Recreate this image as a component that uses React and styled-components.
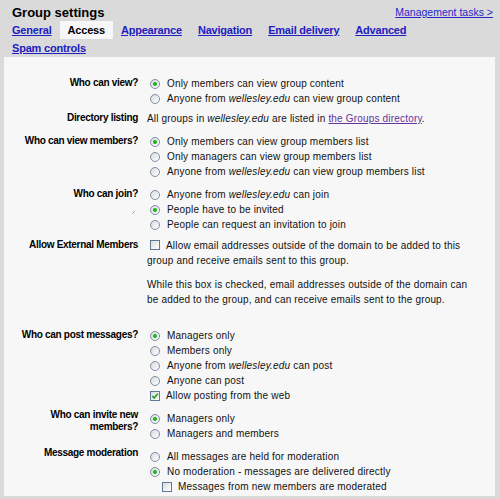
import React from 'react';
import styled, { createGlobalStyle } from 'styled-components';

const Global = createGlobalStyle`
  html, body { margin: 0; padding: 0; background: #dadada; }
  body { font-family: "Liberation Sans", Arial, sans-serif; color: #111; }
`;

const Page = styled.div`
  width: 500px;
  height: 499px;
  box-sizing: border-box;
  padding: 0 5px 3px 4px;
  display: flex;
  flex-direction: column;
  overflow: hidden;
`;

const Header = styled.div`
  display: flex;
  justify-content: space-between;
  align-items: center;
  height: 21px;
  box-sizing: border-box;
  padding: 3px 2px 0 8px;
`;

const Title = styled.h1`
  margin: 0;
  font-size: 13px;
  font-weight: bold;
  color: #000;
`;

const TopLink = styled.a`
  font-size: 10.5px;
  color: #2626c8;
  text-decoration: underline;
`;

const Tabs = styled.nav`
  display: flex;
  flex-wrap: wrap;
  max-width: 440px;
`;

const Tab = styled.a`
  height: 18px;
  line-height: 18px;
  padding: 0 8px;
  font-size: 11px;
  font-weight: bold;
  letter-spacing: -0.2px;
  white-space: nowrap;
  color: ${p => (p.$active ? '#000' : '#2020c0')};
  text-decoration: ${p => (p.$active ? 'none' : 'underline')};
  background: ${p => (p.$active ? '#f7f7f7' : 'transparent')};
`;

const Panel = styled.div`
  flex: 1;
  background: #f7f7f7;
  padding: 19px 0 2px 0;
  display: flex;
  flex-direction: column;
`;

const Row = styled.div`
  display: grid;
  grid-template-columns: 134px 325px;
  column-gap: 9px;
  margin-top: ${p => p.$gap || 0}px;
`;

const Label = styled.div`
  text-align: right;
  font-weight: bold;
  font-size: 10px;
  letter-spacing: -0.3px;
  line-height: 12px;
  padding-top: 1px;
  color: #000;
`;

const Values = styled.div`
  padding-top: ${p => p.$pad || 0}px;
  font-size: 10px;
  letter-spacing: 0.18px;
  line-height: 15px;
  color: #111;
`;

const Option = styled.div`
  display: flex;
  align-items: center;
  height: 15px;
  white-space: nowrap;
  padding-left: ${p => p.$indent || 0}px;
`;

const Radio = styled.span`
  flex: none;
  width: 10px;
  height: 10px;
  box-sizing: border-box;
  border-radius: 50%;
  border: 1px solid #7b8ea8;
  margin: 0 7px 0 3px;
  background: ${p =>
    p.$on
      ? 'radial-gradient(circle at center, #2cb52c 0 1.7px, transparent 2.3px), linear-gradient(135deg, #d8d8d8, #ffffff)'
      : 'linear-gradient(135deg, #d8d8d8, #ffffff)'};
`;

const Box = styled.span`
  flex: none;
  display: inline-flex;
  align-items: center;
  justify-content: center;
  width: 10px;
  height: 10px;
  box-sizing: border-box;
  border: 1px solid #5f7896;
  background: linear-gradient(135deg, #dcdcdc, #ffffff);
  margin: ${p => (p.$inline ? '0 6px 0 3px' : '0 6px 0 3px')};
  vertical-align: ${p => (p.$inline ? '-1px' : 'baseline')};
`;

const Para = styled.p`
  margin: ${p => p.$top || 0}px 0 0 0;
  line-height: 15px;
`;

const Dir = styled.a`
  color: #663399;
  text-decoration: underline;
`;

const Mark = styled.span`
  display: block;
  width: 3px;
  height: 3px;
  margin: 5px 3px 0 auto;
`;

const Check = ({ on, inline }) => (
  <Box $inline={inline}>
    {on && (
      <svg width="8" height="8" viewBox="0 0 8 8">
        <path d="M1.3 4 L3.2 6 L6.8 1.8" fill="none" stroke="#1fa01f" strokeWidth="1.6" />
      </svg>
    )}
  </Box>
);

const R = ({ on, children }) => (
  <Option>
    <Radio $on={on} />
    <span>{children}</span>
  </Option>
);

const Dom = () => <i>wellesley.edu</i>;

export default function App() {
  return (
    <>
      <Global />
      <Page>
        <Header>
          <Title>Group settings</Title>
          <TopLink href="#">Management tasks &gt;</TopLink>
        </Header>
        <Tabs>
          <Tab href="#">General</Tab>
          <Tab $active>Access</Tab>
          <Tab href="#">Appearance</Tab>
          <Tab href="#">Navigation</Tab>
          <Tab href="#">Email delivery</Tab>
          <Tab href="#">Advanced</Tab>
          <Tab href="#">Spam controls</Tab>
        </Tabs>
        <Panel>
          <Row>
            <Label>Who can view?</Label>
            <Values>
              <R on>Only members can view group content</R>
              <R>Anyone from <Dom /> can view group content</R>
            </Values>
          </Row>
          <Row $gap={5}>
            <Label>Directory listing</Label>
            <Values>
              <Para>
                All groups in <Dom /> are listed in <Dir href="#">the Groups directory</Dir>.
              </Para>
            </Values>
          </Row>
          <Row $gap={8}>
            <Label>Who can view members?</Label>
            <Values>
              <R on>Only members can view group members list</R>
              <R>Only managers can view group members list</R>
              <R>Anyone from <Dom /> can view group members list</R>
            </Values>
          </Row>
          <Row $gap={8}>
            <Label>
              Who can join?
              <Mark>
                <svg width="3" height="3" viewBox="0 0 3 3">
                  <path d="M0 3 L3 0" stroke="#7aa07a" strokeWidth="0.8" />
                </svg>
              </Mark>
            </Label>
            <Values>
              <R>Anyone from <Dom /> can join</R>
              <R on>People have to be invited</R>
              <R>People can request an invitation to join</R>
            </Values>
          </Row>
          <Row $gap={6}>
            <Label>Allow External Members</Label>
            <Values>
              <Para>
                <Check inline />
                Allow email addresses outside of the domain to be added to this group and receive emails sent to this group.
              </Para>
              <Para $top={9}>
                While this box is checked, email addresses outside of the domain can be added to the group, and can receive emails sent to the group.
              </Para>
            </Values>
          </Row>
          <Row $gap={21}>
            <Label>Who can post messages?</Label>
            <Values>
              <R on>Managers only</R>
              <R>Members only</R>
              <R>Anyone from <Dom /> can post</R>
              <R>Anyone can post</R>
              <Option>
                <Check on />
                <span>Allow posting from the web</span>
              </Option>
            </Values>
          </Row>
          <Row $gap={5}>
            <Label>Who can invite new members?</Label>
            <Values $pad={3}>
              <R on>Managers only</R>
              <R>Managers and members</R>
            </Values>
          </Row>
          <Row $gap={5}>
            <Label>Message moderation</Label>
            <Values $pad={3}>
              <R>All messages are held for moderation</R>
              <R on>No moderation - messages are delivered directly</R>
              <Option $indent={12}>
                <Check />
                <span>Messages from new members are moderated</span>
              </Option>
            </Values>
          </Row>
        </Panel>
      </Page>
    </>
  );
}
